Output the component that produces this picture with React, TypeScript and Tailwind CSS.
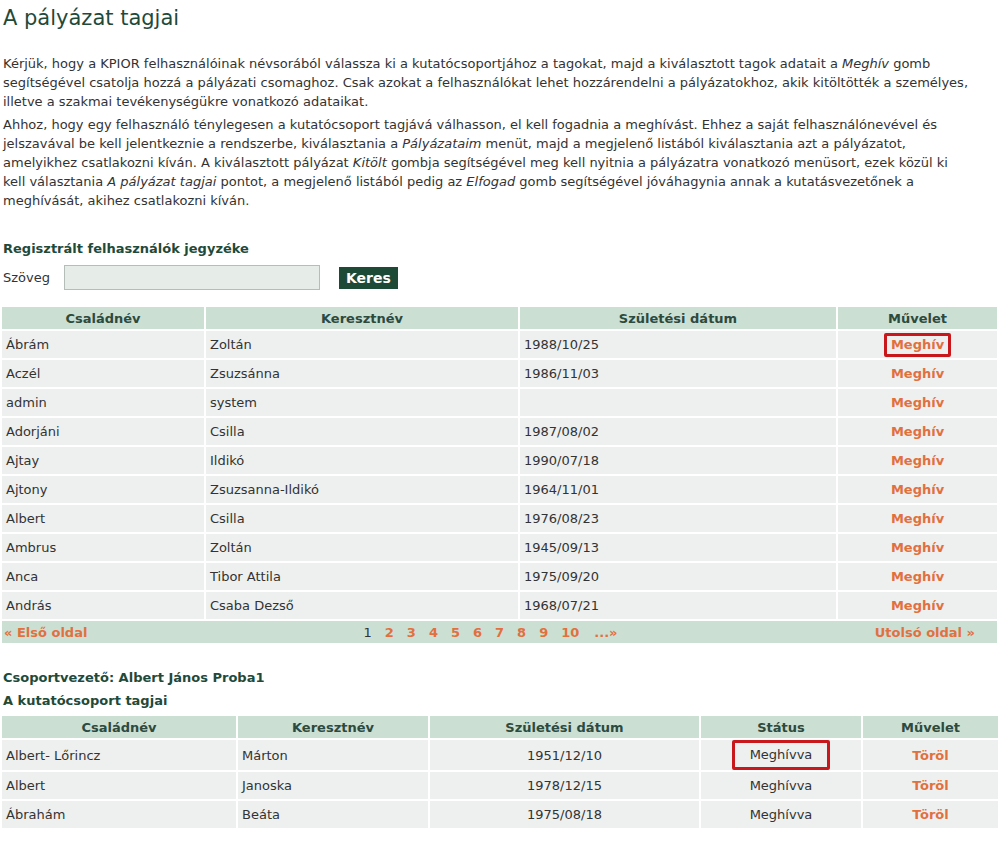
const users = [
  ["Ábrám", "Zoltán", "1988/10/25"],
  ["Aczél", "Zsuzsánna", "1986/11/03"],
  ["admin", "system", ""],
  ["Adorjáni", "Csilla", "1987/08/02"],
  ["Ajtay", "Ildikó", "1990/07/18"],
  ["Ajtony", "Zsuzsanna-Ildikó", "1964/11/01"],
  ["Albert", "Csilla", "1976/08/23"],
  ["Ambrus", "Zoltán", "1945/09/13"],
  ["Anca", "Tibor Attila", "1975/09/20"],
  ["András", "Csaba Dezső", "1968/07/21"],
];

const members = [
  ["Albert- Lőrincz", "Márton", "1951/12/10"],
  ["Albert", "Janoska", "1978/12/15"],
  ["Ábrahám", "Beáta", "1975/08/18"],
];

const th = "bg-[#cbdfd3] text-[#2d4a3e] font-bold text-center h-[22px] p-0";
const td = "bg-[#edf0ef] h-[27px] px-[4px] py-0";
const link = "text-[#e2703f] font-bold";

const App = () => {
  return (
    <div className="bg-white min-h-[859px] text-[13px] leading-[19px] text-[#333] font-['DejaVu_Sans',Verdana,sans-serif] px-[1px]">
      <h1 className="text-[21px] leading-[26px] text-[#1f4a3a] pt-[5px] pl-[2px]">
        A pályázat tagjai
      </h1>

      <div className="mt-[23px] pl-[2px] pr-[3px]">
        <p>
          Kérjük, hogy a KPIOR felhasználóinak névsorából válassza ki a kutatócsoportjához a tagokat, majd a
          kiválasztott tagok adatait a <i>Meghív</i> gomb segítségével csatolja hozzá a pályázati csomaghoz. Csak
          azokat a felhasználókat lehet hozzárendelni a pályázatokhoz, akik kitöltötték a személyes, illetve a szakmai
          tevékenységükre vonatkozó adataikat.
        </p>
        <p className="mt-[4px]">
          Ahhoz, hogy egy felhasználó ténylegesen a kutatócsoport tagjává válhasson, el kell fogadnia a meghívást.
          Ehhez a saját felhasználónevével és
          <br />
          jelszavával be kell jelentkeznie a rendszerbe, kiválasztania a <i>Pályázataim</i> menüt, majd a megjelenő
          listából kiválasztania azt a pályázatot,
          <br />
          amelyikhez csatlakozni kíván. A kiválasztott pályázat <i>Kitölt</i> gombja segítségével meg kell nyitnia a
          pályázatra vonatkozó menüsort, ezek közül ki
          <br />
          kell választania <i>A pályázat tagjai</i> pontot, a megjelenő listából pedig az <i>Elfogad</i> gomb
          segítségével jóváhagynia annak a kutatásvezetőnek a
          <br />
          meghívását, akihez csatlakozni kíván.
        </p>
      </div>

      <h3 className="mt-[29px] pl-[2px] font-bold text-[#1f4a3a]">Regisztrált felhasználók jegyzéke</h3>
      <div className="flex items-center mt-[7px] pl-[2px]">
        <span className="w-[61px]">Szöveg</span>
        <input
          type="text"
          className="w-[256px] h-[25px] bg-[#e6ece8] border border-[#b5bdb8] outline-none"
        />
        <button className="ml-[19px] h-[22px] px-[7px] bg-[#1d4a36] text-white font-bold text-[14px] leading-[22px]">
          Keres
        </button>
      </div>

      <table className="w-[999px] border-separate border-spacing-[2px] mt-[15px] -ml-[1px]">
        <thead>
          <tr>
            <th className={`${th} w-[202px]`}>Családnév</th>
            <th className={`${th} w-[312px]`}>Keresztnév</th>
            <th className={`${th} w-[316px]`}>Születési dátum</th>
            <th className={th}>Művelet</th>
          </tr>
        </thead>
        <tbody>
          {users.map((u, i) => (
            <tr key={i}>
              <td className={td}>{u[0]}</td>
              <td className={td}>{u[1]}</td>
              <td className={td}>{u[2]}</td>
              <td className={`${td} text-center`}>
                {i === 0 ? (
                  <span className={`${link} inline-block border-[3px] border-[#c8181c] rounded-[2px] px-[4px] leading-[18px]`}>
                    Meghív
                  </span>
                ) : (
                  <span className={link}>Meghív</span>
                )}
              </td>
            </tr>
          ))}
          <tr>
            <td colSpan={4} className="bg-[#cbdfd3] h-[22px] p-0">
              <div className="flex items-center font-bold">
                <span className={`${link} flex-1 pl-[2px]`}>« Első oldal</span>
                <span className="flex gap-[13px] pl-[2px]">
                  <span className="font-normal text-[#333]">1</span>
                  {["2", "3", "4", "5", "6", "7", "8", "9", "10"].map((n) => (
                    <span key={n} className={link}>{n}</span>
                  ))}
                  <span className={`${link} ml-[2px]`}>...»</span>
                </span>
                <span className={`${link} flex-1 text-right pr-[22px]`}>Utolsó oldal »</span>
              </div>
            </td>
          </tr>
        </tbody>
      </table>

      <h3 className="mt-[23px] pl-[2px] font-bold text-[#1f4a3a]">Csoportvezető: Albert János Proba1</h3>
      <h3 className="mt-[4px] pl-[2px] font-bold text-[#1f4a3a]">A kutatócsoport tagjai</h3>

      <table className="w-[1000px] border-separate border-spacing-[2px] mt-[4px] -ml-[1px]">
        <thead>
          <tr>
            <th className={`${th} w-[234px]`}>Családnév</th>
            <th className={`${th} w-[190px]`}>Keresztnév</th>
            <th className={`${th} w-[269px]`}>Születési dátum</th>
            <th className={`${th} w-[160px]`}>Státus</th>
            <th className={th}>Művelet</th>
          </tr>
        </thead>
        <tbody>
          {members.map((m, i) => (
            <tr key={i}>
              <td className={td}>{m[0]}</td>
              <td className={td}>{m[1]}</td>
              <td className={`${td} text-center`}>{m[2]}</td>
              <td className={`${td} text-center`}>
                {i === 0 ? (
                  <span className="inline-block border-[3px] border-[#c8181c] rounded-[2px] w-[98px] leading-[24px]">
                    Meghívva
                  </span>
                ) : (
                  "Meghívva"
                )}
              </td>
              <td className={`${td} text-center`}>
                <span className={link}>Töröl</span>
              </td>
            </tr>
          ))}
        </tbody>
      </table>
    </div>
  );
};

export default App;
